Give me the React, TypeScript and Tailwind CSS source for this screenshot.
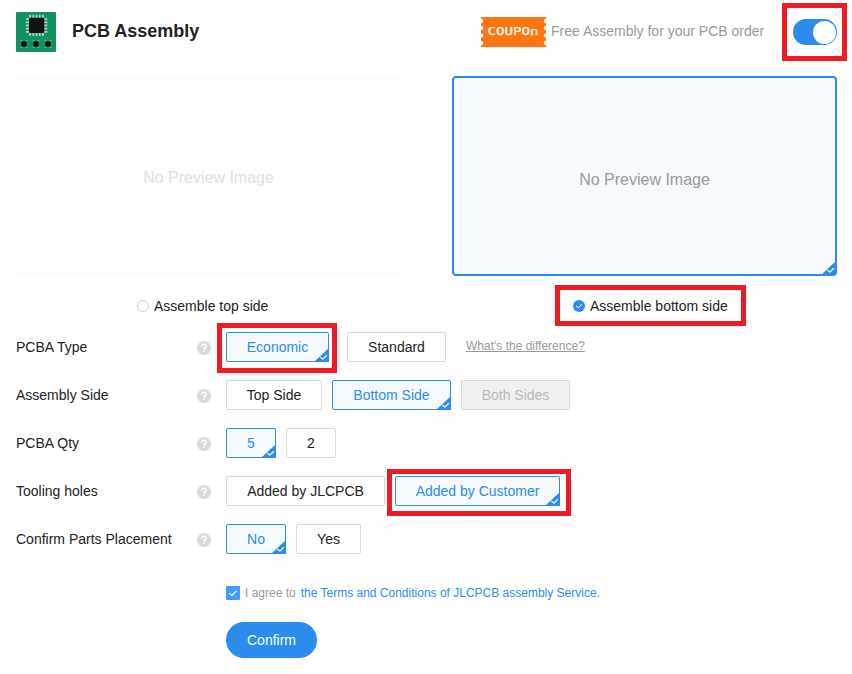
import type { ReactNode } from "react";

const cx = (...parts: (string | false | undefined)[]) => parts.filter(Boolean).join(" ");

function ChipIcon() {
  const pins = [0, 1, 2, 3, 4];
  return (
    <svg width="40" height="40" viewBox="0 0 40 40" className="shrink-0">
      <rect width="40" height="40" rx="1" fill="#10935f" />
      <g fill="#c3d5cc">
        {pins.map((i) => (
          <g key={i}>
            <rect x={13.3 + i * 3.2} y="2.8" width="1.7" height="3.5" />
            <rect x={13.3 + i * 3.2} y="20.4" width="1.7" height="3.5" />
            <rect x="10" y={6.2 + i * 3.2} width="3.5" height="1.7" />
            <rect x="27.7" y={6.2 + i * 3.2} width="3.5" height="1.7" />
          </g>
        ))}
      </g>
      <rect x="13" y="5.7" width="15.3" height="15.2" rx="0.8" fill="#111413" />
      {[8, 20, 32].map((x) => (
        <g key={x}>
          <path
            d={`M${x - 3.3} 29h1.8M${x + 1.5} 29h1.8M${x - 3.3} 35h1.8M${x + 1.5} 35h1.8`}
            stroke="#8fc4aa"
            strokeWidth="1.3"
          />
          <rect x={x - 2.7} y="29.3" width="5.4" height="5.4" fill="#111413" />
        </g>
      ))}
    </svg>
  );
}

function Coupon() {
  const notches = [4, 11, 18.5, 26];
  return (
    <svg width="65" height="30" viewBox="0 0 65 30" className="shrink-0">
      <rect width="65" height="30" fill="#ff7510" />
      {notches.map((y) => (
        <g key={y} fill="#fff">
          <circle cx="0.3" cy={y} r="2" />
          <circle cx="64.7" cy={y} r="2" />
        </g>
      ))}
      <text
        x="6.5"
        y="18.4"
        textLength="51"
        lengthAdjust="spacingAndGlyphs"
        fill="#fff"
        stroke="#fff"
        strokeWidth="0.25"
        className="font-['DejaVu_Sans_Mono',monospace] text-[10.5px]"
      >
        COUPOn
      </text>
    </svg>
  );
}

function Corner({ className }: { className: string }) {
  return (
    <svg width="15" height="14" viewBox="0 0 15 14" className={cx("absolute", className)}>
      <path d="M15 0V14H0Z" fill="#2b8cee" />
      <path d="M6.3 8.9l2.5 2.2 4-3.8" fill="none" stroke="#fff" strokeWidth="1.2" />
    </svg>
  );
}

function Help() {
  return (
    <svg width="14" height="14" viewBox="0 0 14 14" className="mt-0.5 mr-[15px] shrink-0">
      <circle cx="7" cy="7" r="7" fill="#dadada" />
      <path
        d="M4.8 5.4C4.8 3.9 5.8 3.2 7 3.2s2.3.7 2.3 2c0 1.5-2.2 1.5-2.2 3.2"
        fill="none"
        stroke="#fff"
        strokeWidth="1.6"
      />
      <rect x="6.2" y="9.4" width="1.8" height="1.7" fill="#fff" />
    </svg>
  );
}

type OptionProps = {
  label: string;
  width: string;
  state?: "selected" | "disabled";
};

function Option({ label, width, state }: OptionProps) {
  return (
    <button
      className={cx(
        "relative h-[30px] shrink-0 rounded-[2px] border text-center leading-7",
        width,
        state === "selected" && "border-[#2b8cee] bg-[#f6faff] text-[#2b8cee]",
        state === "disabled" && "border-[#d9d9d9] bg-[#f0f0f0] text-[#b8b8b8]",
        !state && "border-[#d9d9d9] bg-white text-[#222]",
      )}
    >
      {label}
      {state === "selected" && <Corner className="-right-px -bottom-px" />}
    </button>
  );
}

function Highlight({ className, children }: { className: string; children: ReactNode }) {
  return <div className={cx("flex shrink-0 border-5 border-[#ee1b24]", className)}>{children}</div>;
}

function Row({ label, children }: { label: string; children: ReactNode }) {
  return (
    <div className="flex h-12 items-center">
      <span className="w-[181px] shrink-0">{label}</span>
      <Help />
      {children}
    </div>
  );
}

export default function App() {
  return (
    <div className="h-[674px] w-[852px] overflow-hidden bg-white pl-4 font-['Liberation_Sans',Arial,sans-serif] text-sm text-[#222]">
      <header className="flex h-16 items-center pr-[5px]">
        <ChipIcon />
        <h1 className="mb-0.5 ml-4 text-lg font-bold">PCB Assembly</h1>
        <div className="ml-auto flex items-center">
          <Coupon />
          <span className="mb-0.5 ml-[5px] w-[231px] whitespace-nowrap text-[#999]">Free Assembly for your PCB order</span>
          <Highlight className="h-[58px] w-[65px] items-center justify-center">
            <div className="ml-px flex h-[26px] w-11 items-center justify-end rounded-full bg-[#2b8cee] pr-px">
              <div className="size-[23px] rounded-full bg-white" />
            </div>
          </Highlight>
        </div>
      </header>

      <section className="mt-3 flex gap-[51px] text-base text-[#999]">
        <div className="flex h-[200px] w-[385px] items-center justify-center bg-[#f6faff] pt-1 opacity-30">
          No Preview Image
        </div>
        <div className="relative flex h-[200px] w-[385px] items-center justify-center rounded-[4px] border-2 border-[#2b8cee] bg-[#f6faff] pt-2">
          No Preview Image
          <Corner className="right-[-1px] bottom-[-1px]" />
        </div>
      </section>

      <div className="mt-[9px] flex h-[41px]">
        <div className="ml-[121px] flex w-[418px] items-center gap-[5px]">
          <span className="size-3 rounded-full border border-[#d0d0d0]" />
          Assemble top side
        </div>
        <Highlight className="w-[191px] items-center gap-[5px] pl-[13px] whitespace-nowrap">
          <svg width="12" height="12" viewBox="0 0 12 12" className="shrink-0">
            <circle cx="6" cy="6" r="6" fill="#2b8cee" />
            <path d="M3 5.8l2.2 2 3.9-3.7" fill="none" stroke="#fff" />
          </svg>
          Assemble bottom side
        </Highlight>
      </div>

      <section className="-mt-[3px]">
        <Row label="PCBA Type">
          <Highlight className="mt-0.5 -ml-[9px] h-[50px] w-[120px] pt-1 pl-1">
            <Option label="Economic" width="w-[103px]" state="selected" />
          </Highlight>
          <div className="ml-2.5">
            <Option label="Standard" width="w-[99px]" />
          </div>
          <a className="mb-0.5 ml-5 text-xs whitespace-nowrap text-[#999] underline">What's the difference?</a>
        </Row>
        <Row label="Assembly Side">
          <div className="flex gap-2.5">
            <Option label="Top Side" width="w-24" />
            <Option label="Bottom Side" width="w-[119px]" state="selected" />
            <Option label="Both Sides" width="w-[109px]" state="disabled" />
          </div>
        </Row>
        <Row label="PCBA Qty">
          <div className="flex gap-2.5">
            <Option label="5" width="w-[50px]" state="selected" />
            <Option label="2" width="w-[50px]" />
          </div>
        </Row>
        <Row label="Tooling holes">
          <Option label="Added by JLCPCB" width="w-[159px]" />
          <Highlight className="mt-[3px] ml-0.5 h-[47px] w-[184px] pt-0.5 pl-[3px]">
            <Option label="Added by Customer" width="w-[165px]" state="selected" />
          </Highlight>
        </Row>
        <Row label="Confirm Parts Placement">
          <div className="flex gap-2.5">
            <Option label="No" width="w-[60px]" state="selected" />
            <Option label="Yes" width="w-[65px]" />
          </div>
        </Row>
      </section>

      <footer className="mt-[22px] pl-[210px]">
        <div className="flex h-4 items-center text-xs whitespace-nowrap text-[#999]">
          <svg width="14" height="14" viewBox="0 0 14 14" className="mr-[5px]">
            <rect width="14" height="14" rx="1" fill="#409eff" />
            <path d="M3.2 7.1l2.5 2.5 5-5" fill="none" stroke="#fff" strokeWidth="1.1" />
          </svg>
          I agree to
          <a className="ml-[5px] text-[#2b8cee]">the Terms and Conditions of JLCPCB assembly Service.</a>
        </div>
        <button className="mt-[21px] h-9 w-[91px] rounded-full bg-[#2b8cee] text-white">Confirm</button>
      </footer>
    </div>
  );
}
